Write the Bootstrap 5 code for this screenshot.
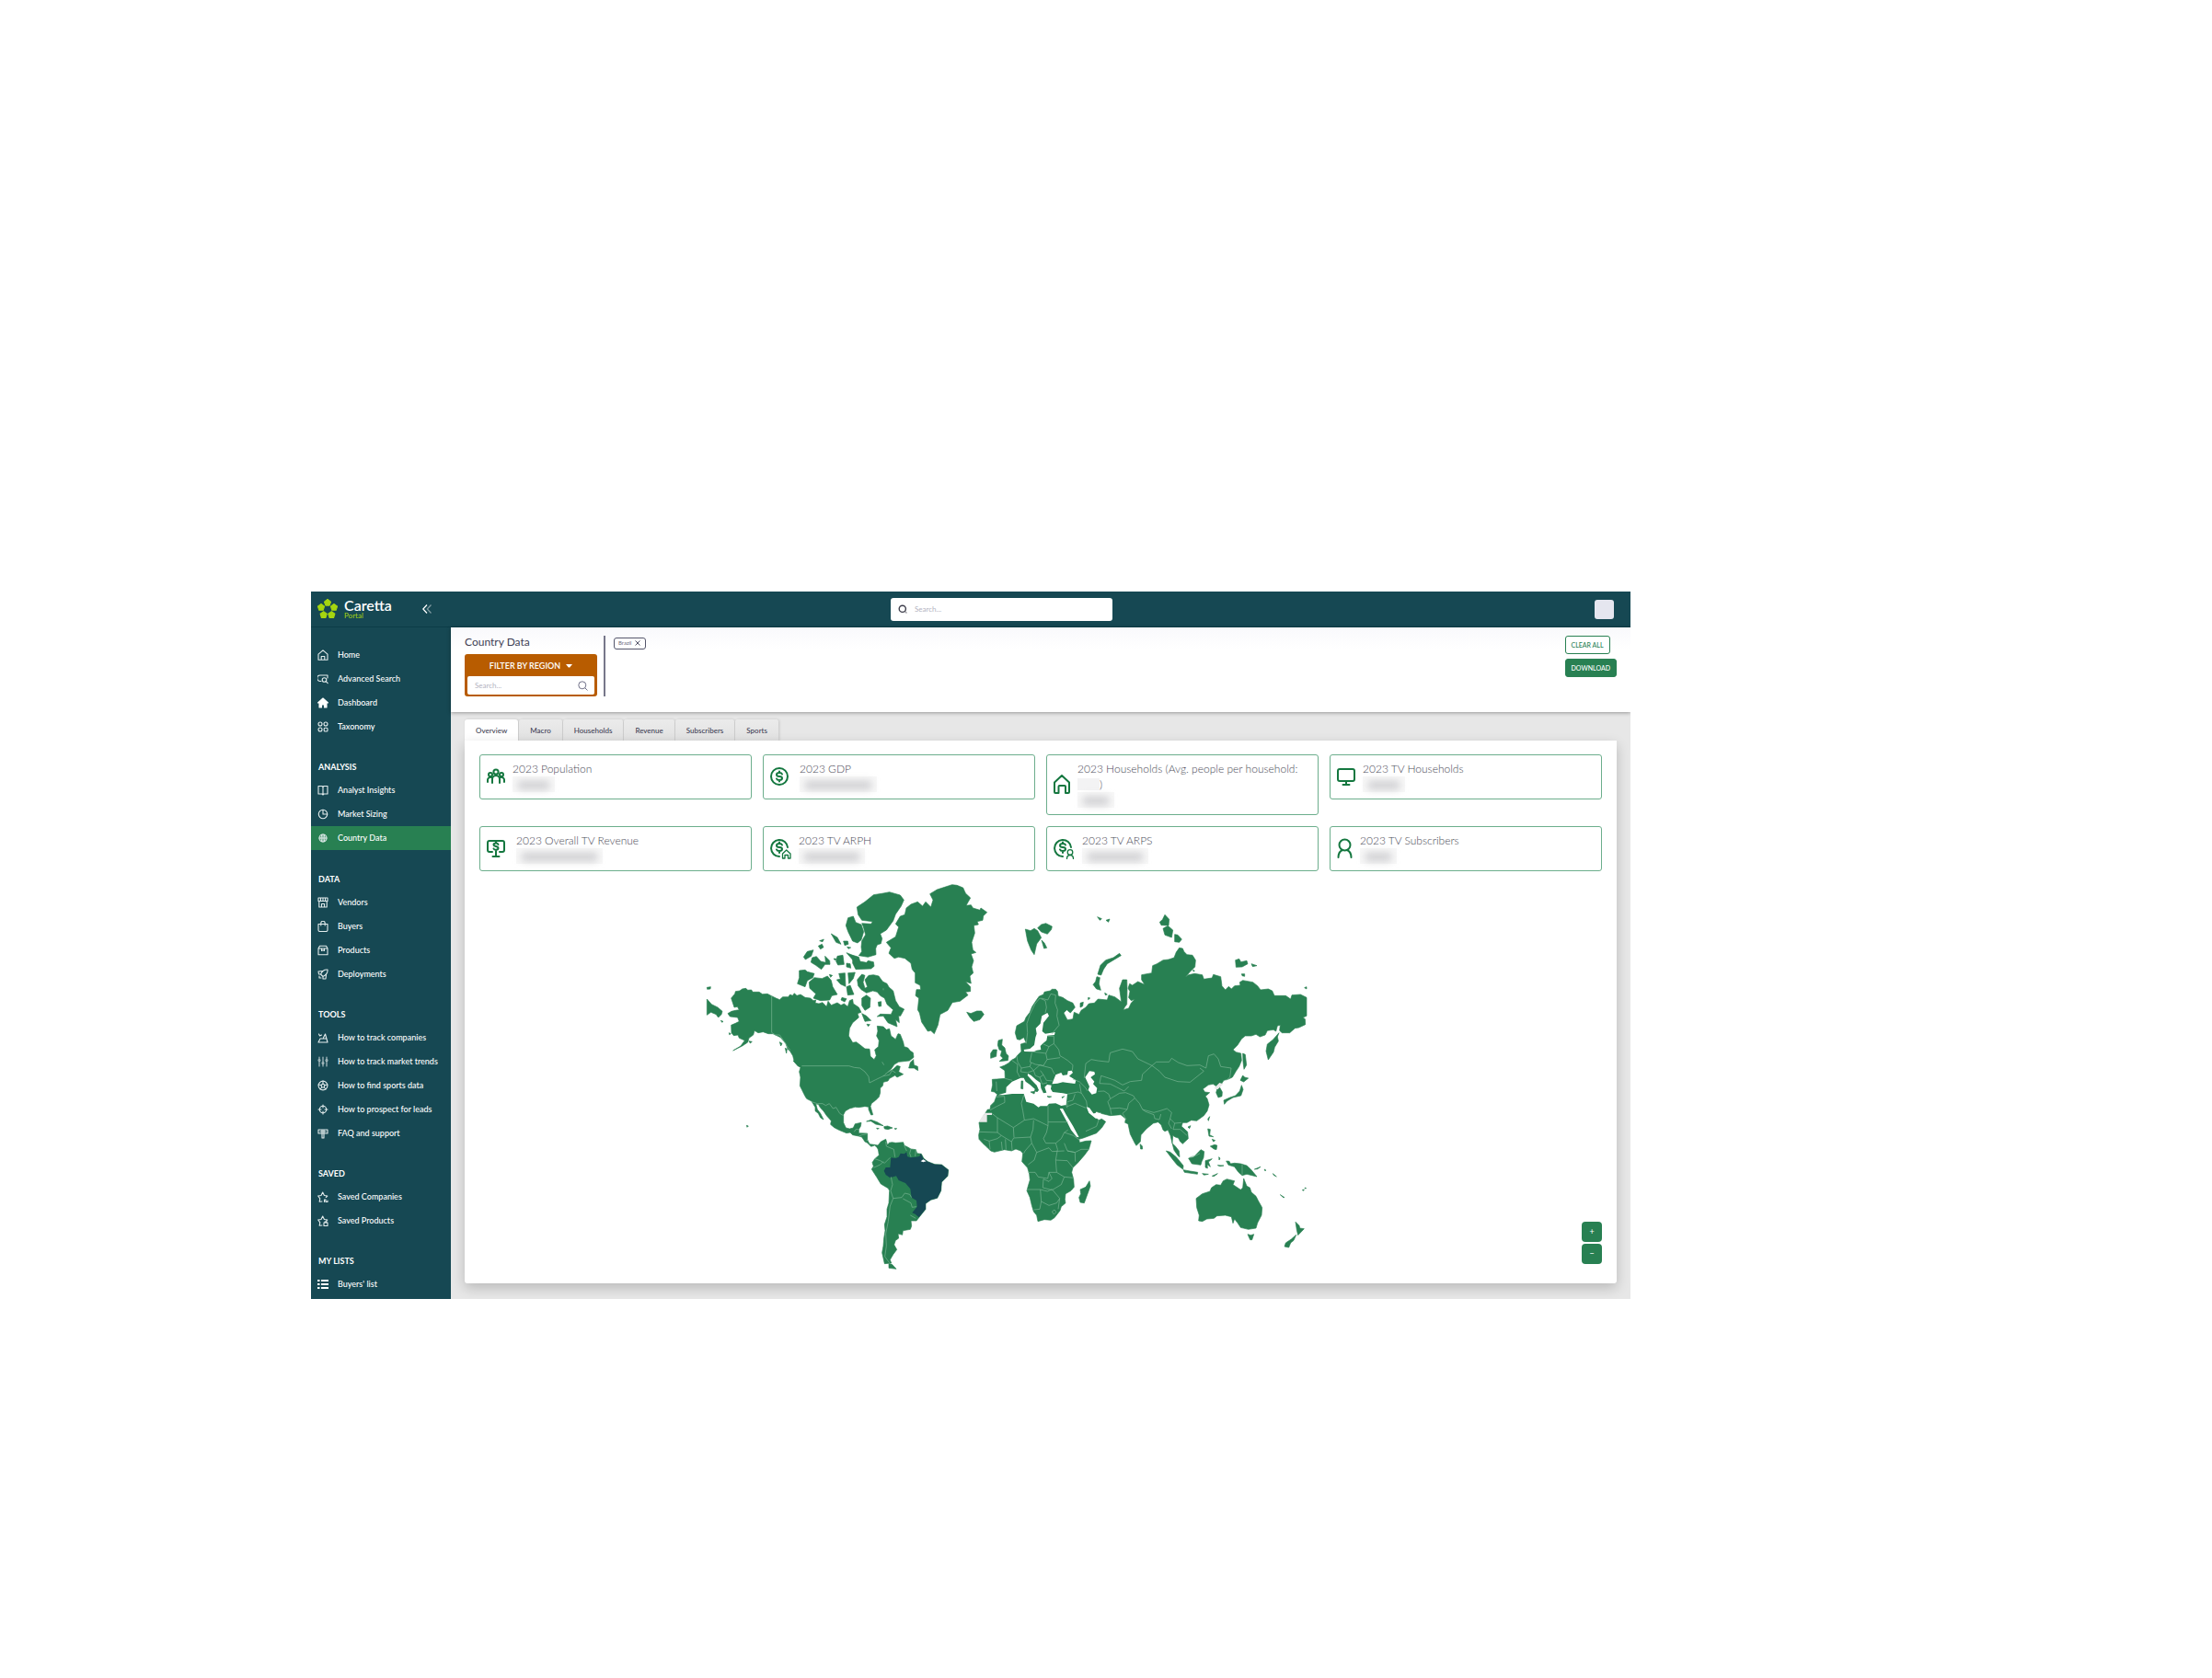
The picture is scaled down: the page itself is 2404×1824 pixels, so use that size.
<!DOCTYPE html>
<html lang="en">
<head>
<meta charset="utf-8">
<meta name="viewport" content="width=device-width, initial-scale=1">
<title>Caretta Portal – Country Data</title>
<link rel="stylesheet" href="https://cdn.jsdelivr.net/npm/bootstrap@5.3.0/dist/css/bootstrap.min.css">
<style>
:root{--teal:#164853;--teal-dark:#0b3c47;--leaf:#288052;--deep:#14773f;--lime:#a5d610;--rust:#b85c00;--ink:#3f3f55}
body{background:#fff;font-family:Lato,"Open Sans",sans-serif;font-size:9px;line-height:12px;color:var(--ink);padding:643px 632px 120px 338px}
svg{display:block;flex:none}
.portal{background:#e7e7e7;overflow:hidden}
.topbar{background:var(--teal);height:39px;border-bottom:1px solid var(--teal-dark)}
.brand{width:152px;padding:0 21px 0 7px;gap:7px}
.brand-name{font-size:16px;line-height:14px;font-weight:600;color:#fff}
.brand-sub{font-size:8px;line-height:8px;color:var(--lime)}
.find-box{width:241px;height:25px;border-radius:3px;margin-right:46px}
.plain{border:0;outline:0;background:transparent;font-size:8px;line-height:12px;padding:0;color:var(--ink);min-width:0}
.plain::placeholder{color:#b3b3bf;opacity:1}
.avatar-btn{width:21px;height:21px;border-radius:3px;background:#e5e6ef;border:0;margin-right:18px}
.sidebar{width:152px;background:var(--teal);padding:17px 0 2px}
.sidebar a{height:26px;padding:0 7px;gap:10px;color:#fff;text-decoration:none;font-weight:500;white-space:nowrap}
.sidebar a.on{background:var(--leaf);margin-bottom:1px}
.sidebar h2{font-size:9px;line-height:12px;font-weight:700;color:#fff;margin:0;padding:25px 8px 6px}
.sidebar svg{width:12px;height:12px;fill:none;stroke:#e3eced;stroke-width:1.1;stroke-linejoin:round;stroke-linecap:round}
.headband{height:92px;background:linear-gradient(#f9f9fc,#fff 24px);padding:8px 15px 0;box-shadow:0 1px 4px rgba(0,0,0,.35);position:relative}
.headband h1{font-size:12px;line-height:16px;font-weight:400;margin:0 0 5px}
.filter{width:144px;height:46px;background:var(--rust);border-radius:3px;padding:3px}
.filter-btn{border:0;background:none;color:#fff;font-size:9px;line-height:12px;font-weight:600;padding:4px 0 5px;gap:6px;width:100%}
.filter-find{background:#fff;border-radius:2px;height:20px;padding:0 7px 0 8px}
.rule{width:2px;height:66px;background:#77778a;margin:1px 9px 0 7px}
.chip{height:13px;border:1px solid #55566b;border-radius:3px;background:#fff;font-size:6px;line-height:8px;padding:0 5px 1px 4px;gap:3px;color:#6d6d80;margin-top:3px}
.acts{gap:5px;padding-top:1px}
.act{font-size:7px;line-height:10px;padding:4px 6px;border:1px solid var(--leaf);border-radius:3px;height:20px;white-space:nowrap;font-weight:500}
.act-line{background:#fff;color:var(--leaf)}
.act-fill{background:var(--leaf);color:#fff}
.content{padding:8px 15px 17px}
.tabs{border:0;gap:1px}
.tabs .nav-link{border:0;border-radius:3px 3px 0 0;font-size:8px;line-height:12px;padding:6px 12px;color:var(--ink);font-weight:500;background:linear-gradient(#ebebeb,#e1e1e1);box-shadow:1px 0 3px rgba(0,0,0,.15)}
.tabs .nav-link.active{background:#fff;color:var(--ink)}
.panel{background:#fff;border-radius:0 0 3px 3px;padding:15px 16px 8px;box-shadow:0 5px 14px rgba(0,0,0,.2);position:relative}
.stats{--bs-gutter-x:12px;--bs-gutter-y:12px}
.stat{border:1px solid #6cae8c;border-radius:3px;padding:6px 7px 7px;gap:8px}
.stat h3{font-size:12px;line-height:17px;font-weight:300;color:#4c4c58;margin:0}
.stat svg{fill:none;stroke:var(--deep);stroke-width:2;stroke-linecap:round;stroke-linejoin:round}
.veil{display:block;height:17px;background:#f8f8f8;padding:5px 6px 3px}
.veil i{display:block;height:9px;background:#cdcdd0;filter:blur(4px)}
.veil-inline{display:inline-block;width:24px;height:13px;background:#f3f3f4;vertical-align:top;margin-top:2px}
.w46{width:46px}.w84{width:84px}.w40{width:40px}.w94{width:94px}.w72{width:72px}
.map{margin-top:4px}
.map svg{width:100%;height:auto}
.land{fill:var(--leaf);stroke:var(--leaf);stroke-width:2;stroke-linejoin:round}
.sea{fill:#fff}
.edge{fill:none;stroke:#7bb795;stroke-width:2;stroke-linejoin:round}
.zoomers{position:absolute;right:16px;bottom:21px;gap:2px}
.zoomers button{width:22px;height:22px;border:0;border-radius:4px;background:var(--leaf);color:#fff;font-size:9px;line-height:12px;padding:0}
</style>
<script src="https://cdn.jsdelivr.net/npm/bootstrap@5.3.0/dist/js/bootstrap.bundle.min.js"></script>
</head>
<body>
<div class="portal">
  <header class="topbar d-flex align-items-center justify-content-between">
    <div class="brand d-flex align-items-center">
      <svg width="22" height="22" viewBox="0 0 22 22" fill="#a5d610"><defs><path id="petal" d="M11 .3 14.6 3 13.2 7.2H8.800L7.400 3Z" stroke="#a5d610" stroke-linejoin="round"/></defs><use href="#petal"/><use href="#petal" transform="rotate(72 11 11.500)"/><use href="#petal" transform="rotate(144 11 11.500)"/><use href="#petal" transform="rotate(216 11 11.500)"/><use href="#petal" transform="rotate(288 11 11.500)"/></svg>
      <div class="flex-grow-1"><div class="brand-name">Caretta</div><div class="brand-sub">Portal</div></div>
      <svg width="10" height="10" viewBox="0 0 10 10" fill="none" stroke="#fff" stroke-width="1.300"><path d="M5 .5.800 5 5 9.500"/><path d="M9.500.5 5.300 5l4.200 4.500" opacity=".45"/></svg>
    </div>
    <label class="find-box bg-white d-flex align-items-center px-2 gap-2"><svg width="10" height="10" viewBox="0 0 10 10" fill="none" stroke="#3f3f4c" stroke-width="1.400"><circle cx="4.800" cy="4.800" r="3.600"/><path d="m7.500 7.500 2 2" opacity=".5"/></svg><input class="plain flex-grow-1" type="text" placeholder="Search..." aria-label="Search the portal"></label>
    <button class="avatar-btn" type="button" aria-label="Account"></button>
  </header>
  <div class="d-flex">
    <nav class="sidebar flex-shrink-0" aria-label="Main">
      <a class="d-flex align-items-center" href="#"><svg viewBox="0 0 12 12"><path d="M1 5.200 6 .9l5 4.300v6H1ZM4.200 11V7.500h3.600V11"/></svg>Home</a>
      <a class="d-flex align-items-center" href="#"><svg viewBox="0 0 12 12"><path d="M4 8.500H3A2.500 2.500 0 0 1 3 2h8v3"/><circle cx="7.500" cy="7" r="2.300"/><path d="m9.200 8.700 2 2"/></svg>Advanced Search</a>
      <a class="d-flex align-items-center" href="#"><svg viewBox="0 0 12 12"><path fill="#fff" stroke="#fff" d="M.5 6 6 1l5.500 5H10v5H7.500V8h-3v3H2V6Z"/></svg>Dashboard</a>
      <a class="d-flex align-items-center" href="#"><svg viewBox="0 0 12 12"><circle cx="3" cy="3" r="2"/><circle cx="9" cy="3" r="2"/><circle cx="3" cy="9" r="2"/><rect x="7.200" y="7.200" width="3.800" height="3.800" rx="1"/></svg>Taxonomy</a>
      <h2>ANALYSIS</h2>
      <a class="d-flex align-items-center" href="#"><svg viewBox="0 0 12 12"><path d="M1 1.500h4l1 1 1-1h4v8.500H7l-1 1-1-1H1ZM6 2.500V11"/></svg>Analyst Insights</a>
      <a class="d-flex align-items-center" href="#"><svg viewBox="0 0 12 12"><circle cx="6" cy="6" r="4.700"/><path d="M6 1.300V6h4.700"/></svg>Market Sizing</a>
      <a class="d-flex align-items-center on" href="#" aria-current="page"><svg viewBox="0 0 12 12"><circle cx="6" cy="6" r="4"/><path d="M2 6h8M6 2v8M4.500 2.500q-1 3.500 0 7M7.500 2.500q1 3.500 0 7"/></svg>Country Data</a>
      <h2>DATA</h2>
      <a class="d-flex align-items-center" href="#"><svg viewBox="0 0 12 12"><path d="M1 1h10v3.500H1ZM1.800 4.500V11h8.400V4.500M3.500 1v3.500M6 1v3.500M8.500 1v3.500M4.500 11V7.500h3V11"/></svg>Vendors</a>
      <a class="d-flex align-items-center" href="#"><svg viewBox="0 0 12 12"><path d="M1 3.500h10V10q0 1.500-1.500 1.500h-7Q1 11.500 1 10ZM3.800 5V2.500a2.200 2.200 0 0 1 4.400 0V5"/></svg>Buyers</a>
      <a class="d-flex align-items-center" href="#"><svg viewBox="0 0 12 12"><path d="M1 4 2.500 1.300h7L11 4v6.700H1ZM1 4h10M4.500 4v2.500L6 5.800l1.500.7V4"/></svg>Products</a>
      <a class="d-flex align-items-center" href="#"><svg viewBox="0 0 12 12"><path d="M11 1Q6 .5 3.500 6L6 8.500Q11.500 6 11 1ZM5.500 2.500 1 3l.5 3h2M9.500 6.500 9 11H6V8.500M2 8v2h2"/></svg>Deployments</a>
      <h2>TOOLS</h2>
      <a class="d-flex align-items-center" href="#"><svg viewBox="0 0 12 12"><path d="M1 11h10L8.500 2 6.500 6M1 11l2-4h6M1.500 2l1 2 2-1"/></svg>How to track companies</a>
      <a class="d-flex align-items-center" href="#"><svg viewBox="0 0 12 12" opacity=".8"><path d="M2 1v2M2 6v5M6 1v5M6 9v2M10 1v2M10 6v5"/><circle cx="2" cy="4.500" r="1"/><circle cx="6" cy="7.500" r="1"/><circle cx="10" cy="4.500" r="1"/></svg>How to track market trends</a>
      <a class="d-flex align-items-center" href="#"><svg viewBox="0 0 12 12"><circle cx="6" cy="6" r="4.900"/><path d="m6 4 2 1.500L7.200 8H4.800L4 5.500ZM6 1v3M11 5 8 5.500M9 10 7.200 8M3 10l1.800-2M1 5l3 .5"/></svg>How to find sports data</a>
      <a class="d-flex align-items-center" href="#"><svg viewBox="0 0 12 12"><circle cx="6" cy="6" r="3.700"/><path d="M6 1v3M6 8v3M1 6h3M8 6h3"/></svg>How to prospect for leads</a>
      <a class="d-flex align-items-center" href="#"><svg viewBox="0 0 12 12"><path d="M1 2h10v4H1ZM5 2v9h2V2M3 4h6"/></svg>FAQ and support</a>
      <h2>SAVED</h2>
      <a class="d-flex align-items-center" href="#"><svg viewBox="0 0 12 12"><path d="M5 11 2.200 11.200 2.800 7.800.7 5l3.300-.5L5.700 1l1.700 3.500 3.400.5-1.500 1.500M7.500 11.500V9h1.500v2.500h2V10"/></svg>Saved Companies</a>
      <a class="d-flex align-items-center" href="#"><svg viewBox="0 0 12 12"><path d="M5 11 2.200 11.200 2.800 7.800.7 5l3.300-.5L5.700 1l1.700 3.500 3.400.5-1 1M7 8h4v3.500H7ZM8 8V7h2v1"/></svg>Saved Products</a>
      <h2>MY LISTS</h2>
      <a class="d-flex align-items-center" href="#"><svg viewBox="0 0 12 12"><path stroke="#fff" stroke-width="2" stroke-linecap="butt" d="M0 2h2.500M4 2h8M0 6h2.500M4 6h8M0 10h2.500M4 10h8"/></svg>Buyers' list</a>
    </nav>
    <main class="flex-grow-1">
      <section class="headband d-flex">
        <div>
          <h1>Country Data</h1>
          <div class="filter">
            <button class="filter-btn d-flex align-items-center justify-content-center" type="button">FILTER BY REGION<svg width="7" height="4" viewBox="0 0 7 4"><path fill="#fff" d="M0 0h7L4.200 3.600H2.800Z"/></svg></button>
            <label class="filter-find d-flex align-items-center"><input class="plain flex-grow-1" type="text" placeholder="Search..." aria-label="Search regions"><svg width="11" height="11" viewBox="0 0 11 11" fill="none" stroke="#6f7088"><circle cx="4.800" cy="4.800" r="4"/><path d="m7.800 7.800 2.700 2.700"/></svg></label>
          </div>
        </div>
        <div class="rule"></div>
        <div class="flex-grow-1"><button class="chip d-flex align-items-center" type="button">Brazil <svg width="6" height="6" viewBox="0 0 6 6" stroke="#55566b"><path d="m.5.5 5 5m0-5-5 5"/></svg></button></div>
        <div class="acts d-flex flex-column align-items-start">
          <button class="act act-line" type="button">CLEAR ALL</button>
          <button class="act act-fill" type="button">DOWNLOAD</button>
        </div>
      </section>
      <section class="content">
        <ul class="nav nav-tabs tabs" role="tablist">
          <li class="nav-item"><button class="nav-link active" type="button" role="tab">Overview</button></li>
          <li class="nav-item"><button class="nav-link" type="button" role="tab">Macro</button></li>
          <li class="nav-item"><button class="nav-link" type="button" role="tab">Households</button></li>
          <li class="nav-item"><button class="nav-link" type="button" role="tab">Revenue</button></li>
          <li class="nav-item"><button class="nav-link" type="button" role="tab">Subscribers</button></li>
          <li class="nav-item"><button class="nav-link" type="button" role="tab">Sports</button></li>
        </ul>
        <div class="panel">
          <div class="row row-cols-4 align-items-start stats">
            <div class="col"><div class="stat d-flex align-items-center"><svg width="20" height="18" viewBox="0 0 20 18"><circle cx="10" cy="4" r="2.600"/><circle cx="4" cy="7" r="2"/><circle cx="16" cy="7" r="2"/><path d="M6 16v-4a4 4 0 0 1 8 0v4M1 15v-2a3 3 0 0 1 4-3M19 15v-2a3 3 0 0 0-4-3"/></svg><div><h3>2023 Population</h3><span class="veil w46"><i></i></span></div></div></div>
            <div class="col"><div class="stat d-flex align-items-center"><svg class="me-1" width="20" height="20" viewBox="0 0 20 20"><circle cx="10" cy="10" r="9"/><path d="M13 7.500Q12.500 6 10 6 7 6 7 8t3 2 3 2-3 2q-2.500 0-3-1.500M10 4.500V6M10 14v1.500"/></svg><div><h3>2023 GDP</h3><span class="veil w84"><i></i></span></div></div></div>
            <div class="col"><div class="stat d-flex align-items-center"><svg width="18" height="21" viewBox="0 0 18 21"><path d="M1 8.500 9 1l8 7.500V19q0 1-1 1h-3v-7q0-1-1-1H6.500q-1 0-1 1v7H2q-1 0-1-1Z"/></svg><div><h3>2023 Households (Avg. people per household: <span class="veil-inline"></span>)</h3><span class="veil w40"><i></i></span></div></div></div>
            <div class="col"><div class="stat d-flex align-items-center"><svg width="20" height="20" viewBox="0 0 20 20"><rect x="1" y="2" width="18" height="13" rx="2"/><path d="M10 15v3.500M6.500 19h7"/></svg><div><h3>2023 TV Households</h3><span class="veil w46"><i></i></span></div></div></div>
            <div class="col"><div class="stat d-flex align-items-center"><svg class="me-1" width="20" height="20" viewBox="0 0 20 20"><path d="M6 14H3q-2 0-2-2V4q0-2 2-2h14q2 0 2 2v8q0 2-2 2h-3M10 14v4.500M6.500 19h7M12.500 6Q12 4.500 10 4.500 7.500 4.500 7.500 6T10 8t2.500 2-2.500 1.800Q8 11.800 7.500 10.500M10 3v1M10 12v2"/></svg><div><h3>2023 Overall TV Revenue</h3><span class="veil w94"><i></i></span></div></div></div>
            <div class="col"><div class="stat d-flex align-items-center"><svg width="23" height="23" viewBox="0 0 23 23"><path d="M10 20A9 9 0 1 1 19 10M13 7.500Q12.500 6 10 6 7 6 7 8t3 2 3 2-3 2q-2.500 0-3-1.500M10 4.500V6M10 14v2"/><path stroke-width="1.300" d="M13.500 17 17.700 13l4.300 4v5h-2.500v-3.500h-3.500V22h-2.500Z"/></svg><div><h3>2023 TV ARPH</h3><span class="veil w72"><i></i></span></div></div></div>
            <div class="col"><div class="stat d-flex align-items-center"><svg width="23" height="23" viewBox="0 0 23 23"><path d="M10 20A9 9 0 1 1 19 10M13 7.500Q12.500 6 10 6 7 6 7 8t3 2 3 2-3 2q-2.500 0-3-1.500M10 4.500V6M10 14v2"/><g stroke-width="1.300"><circle cx="18" cy="15.500" r="2.800"/><path d="M14.500 22.500q0-4 3.500-4t3.500 4"/></g></svg><div><h3>2023 TV ARPS</h3><span class="veil w72"><i></i></span></div></div></div>
            <div class="col"><div class="stat d-flex align-items-center"><svg width="17" height="22" viewBox="0 0 17 22"><circle cx="8.500" cy="7.500" r="6"/><path d="M1.500 21q0-6 4.500-8M15.500 21q0-6-4.500-8"/></svg><div><h3>2023 TV Subscribers</h3><span class="veil w40"><i></i></span></div></div></div>
          </div>
          <div class="map">
            <svg viewBox="-717 30 3660 1308" role="img" aria-label="World map with Brazil selected">
              <!-- the Americas and Greenland -->
              <g class="land">
                <path d="M104 432 116 418 118 410 132 408 140 402 152 400 158 406 170 405 174 412 195 412 206 419 222 418 236 425 250 432 262 437 272 428 290 428 296 420 304 424 310 416 318 424 330 420 345 430 362 432 372 440 380 438 378 448 390 450 402 446 415 460 420 442 430 455 450 447 462 455 472 450 484 460 490 440 500 436 502 450 520 462 528 478 516 482 520 495 500 512 490 530 487 555 500 577 512 575 525 585 540 597 555 598 558 622 570 632 577 620 572 600 584 590 586 570 578 555 582 540 580 523 600 525 610 535 620 532 625 555 640 566 648 548 655 550 665 575 668 590 680 594 688 604 697 610 699 625 685 636 650 640 636 648 625 664 612 676 632 664 645 652 655 655 650 672 665 680 645 690 638 684 620 694 615 702 600 706 598 718 590 725 590 740 586 754 575 765 562 775 558 785 566 812 560 813 552 795 552 787 540 785 520 788 508 787 490 792 476 800 470 812 470 838 478 855 490 858 502 855 508 842 528 838 526 850 520 860 520 872 548 873 548 895 556 908 570 910 582 912 582 922 572 912 560 916 548 904 540 900 530 885 520 882 500 878 492 870 480 872 455 862 440 854 428 844 430 832 415 815 405 800 395 790 388 778 380 777 385 795 395 808 405 828 395 822 388 808 378 800 378 788 366 768 350 760 344 750 334 730 328 718 330 690 326 672 330 658 310 640 305 620 296 605 288 598 282 580 265 560 240 548 225 548 208 542 192 545 180 538 176 552 162 562 158 576 140 588 110 603 135 588 148 570 130 562 126 552 112 554 105 545 104 520 118 514 130 508 125 495 100 492 93 482 105 475 118 472 130 470 124 460 114 462Z"/>
                <path d="M824 62 840 64 860 72 868 90 884 105 870 130 886 128 892 138 915 145 918 138 938 152 926 164 924 178 906 182 910 192 895 195 898 220 888 250 892 275 902 283 886 288 894 310 888 330 893 350 882 360 886 384 868 378 884 395 884 410 868 412 876 422 850 442 825 446 810 472 785 485 778 520 766 548 755 538 745 540 725 510 718 480 712 470 716 432 705 424 708 404 722 404 720 390 704 382 704 350 694 338 690 318 670 302 650 298 636 302 618 286 625 268 610 250 640 232 650 200 640 190 655 165 670 160 675 138 690 126 712 118 728 132 738 118 755 135 762 112 752 92 775 78 800 70Z"/>
                <path d="M514 135 540 118 568 95 600 90 620 86 655 96 667 112 658 132 640 158 632 180 610 210 590 222 596 238 592 254 580 258 575 270 576 290 550 298 520 293 530 280 528 265 530 245 542 225 535 200 530 188 560 190 565 182 530 178 518 160Z"/>
                <path d="M485 170 502 165 510 185 528 192 536 215 528 242 516 252 500 246 485 215 478 195ZM500 292 520 298 524 312 545 316 550 310 568 314 570 328 560 336 510 338 500 318ZM326 342 345 340 352 346 375 352 370 365 352 375 345 395 320 385 326 365ZM358 380 375 365 400 368 418 360 430 374 435 395 450 420 432 424 425 438 395 440 372 432 380 418 360 400ZM340 298 352 280 372 275 365 295 346 306ZM368 300 382 296 396 312 412 316 410 295 425 310 426 322 410 322 398 338 380 325 364 315ZM388 262 400 256 405 266 395 272ZM392 245 406 240 402 248ZM430 222 450 234 462 256 446 250ZM470 246 484 246 486 256 474 260ZM450 295 468 292 472 322 452 324 446 312ZM480 284 500 292 506 314 492 298ZM480 318 492 320 494 334 480 330ZM482 265 494 267 486 271ZM438 303 448 304 443 309ZM455 352 475 350 477 394 460 386 448 372 460 370ZM485 350 508 348 502 368 488 385ZM480 395 492 390 504 420 484 422ZM465 430 480 434 474 444 462 438ZM424 355 434 358 428 364Z"/>
                <path d="M515 372 530 354 540 358 534 380 540 400 548 395 540 372 552 358 568 356 585 360 598 378 612 385 618 396 632 408 640 440 652 460 668 468 656 490 650 490 652 512 640 502 645 525 615 512 600 490 580 492 590 484 625 485 632 470 612 452 604 432 590 424 580 412 566 408 545 415 528 404 518 392ZM530 432 545 422 558 432 556 462 540 472 530 456ZM530 482 545 490 560 505 540 508ZM583 445 593 443 593 458 585 459ZM546 517 556 518 551 524ZM683 660 688 642 698 632 700 650 712 655 713 668 700 660ZM25 435 40 452 60 462 75 475 72 485 62 495 55 485 38 478 25 487ZM25 397 37 395 36 402 26 403ZM872 478 885 482 905 474 920 474 928 485 915 502 895 508 882 494ZM70 505 78 508 74 511ZM97 545 103 548 98 551ZM262 575 270 580 266 588ZM280 595 286 598 284 612ZM306 636 320 642 336 658 322 654ZM162 572 172 574 166 579Z"/>
                <path d="M545 834 560 829 580 836 600 848 575 843 560 833ZM602 851 614 849 630 855 615 860 604 858ZM578 856 586 857 580 859ZM636 857 644 857 640 860ZM154 847 160 849 156 853Z"/>
                <path d="M580 915 592 900 608 892 612 905 628 902 640 904 665 902 668 912 680 918 690 924 706 926 710 938 724 940 732 955 745 965 768 974 790 975 812 992 810 1012 790 1032 788 1060 776 1084 755 1090 738 1102 738 1120 718 1145 708 1158 690 1158 692 1175 688 1186 664 1190 662 1204 648 1200 650 1215 640 1222 635 1236 644 1252 632 1268 622 1285 626 1296 604 1298 600 1280 596 1262 600 1240 602 1215 606 1190 604 1170 612 1145 612 1120 618 1100 620 1060 616 1052 592 1038 578 1015 562 990 568 980 564 968 572 956 586 944 584 930ZM618 1298 628 1300 642 1315 618 1312Z"/>
              </g>
              <path fill="#164853" d="M625 952 640 954 650 950 656 938 668 940 676 934 678 948 688 952 705 950 718 948 722 938 730 955 745 965 768 974 790 975 812 992 810 1012 790 1032 788 1060 776 1084 755 1090 738 1102 738 1120 716 1147 704 1136 694 1132 710 1112 708 1092 692 1082 688 1054 672 1035 650 1026 642 1012 622 1018 608 1008 602 995 608 984 622 984Z"/>
              <path class="sea" d="M722 964 730 958 740 964 730 967ZM612 898 618 904 614 910ZM560 300 570 300 565 303Z"/>
              <path class="edge" d="M236 425V544L248 552 262 552 278 575 290 595 298 602M334 653H488L505 658 524 660 540 672 552 688 555 708 575 698 600 686 620 682 628 668 640 675M600 686 606 680 622 668M366 770 385 776H402L412 782 424 776 436 792 446 788 458 808 470 815M505 868 510 860 520 860M520 882 530 878 548 875M545 895 552 896M608 900 610 915 634 925 638 950M572 956 590 962 604 970 622 952M568 985 590 975 600 965M625 1015 630 1040 624 1060 632 1085 622 1110 616 1160 608 1200 610 1240 605 1275 620 1295M632 1085 660 1082 670 1068 686 1072 692 1082M664 1086 690 1100 694 1114 708 1112M688 1140 706 1150M668 912 676 930M690 924 686 938 690 950M706 926 704 948M596 640 602 650M600 400 600 406"/>
              <!-- Europe, Asia and Africa -->
              <g transform="translate(900 0)">
                <g class="land">
                  <path d="M268 410 262 403 250 403 244 408 225 412 222 420 208 426 198 440 185 460 178 478 165 495 160 508 135 522 130 545 136 566 145 568 158 560 166 578 160 578 148 582 150 606 138 618 130 628 118 634 108 644 94 652 80 657 96 668 97 694 70 696 55 697 56 715 52 736 62 738 72 746 68 754 62 770 50 782 48 795 40 795 32 808 18 830 12 838 15 860 11 878 12 892 24 905 38 918 50 930 62 934 95 926 118 930 132 924 148 930 155 938 152 965 170 985 176 1005 178 1025 172 1045 168 1060 178 1082 184 1108 190 1128 200 1140 204 1160 225 1154 246 1156 258 1148 276 1125 280 1112 294 1100 292 1088 294 1070 312 1060 322 1048 320 1022 314 1000 318 985 335 968 355 945 370 925 378 897 360 898 340 903 338 892 352 888 395 872 412 855 425 835 412 826 402 830 385 812 395 802 410 808 440 815 474 812 490 825 488 838 498 842 505 875 520 905 525 913 538 900 540 878 558 858 580 840 596 836 606 845 612 862 618 866 628 862 636 880 642 905 648 928 660 945 666 950 664 930 652 915 642 905 644 880 652 885 662 888 668 900 676 907 694 890 692 868 672 850 676 838 690 838 704 830 722 832 745 815 756 800 762 780 756 760 750 752 764 740 748 738 742 728 760 715 775 712 790 722 785 740 792 756 804 752 805 738 796 722 810 700 825 696 838 690 850 670 860 655 868 635 866 612 850 608 840 600 855 585 868 565 880 555 900 555 915 550 928 558 945 552 952 538 972 535 980 540 985 522 994 520 992 538 1000 545 1025 545 1042 530 1055 528 1076 518 1075 500 1068 495 1080 490 1080 430 1060 420 1032 422 1028 435 1012 424 975 424 968 408 955 402 930 405 920 392 905 380 872 374 862 380 864 390 845 392 835 402 826 394 815 405 804 392 800 362 776 355 772 366 745 370 740 356 715 352 695 356 685 363 700 346 716 330 718 308 708 292 690 290 680 280 676 270 665 268 655 282 648 300 630 306 612 308 592 320 578 326 575 350 542 356 542 372 552 388 530 378 512 390 503 385 498 400 504 410 500 430 508 440 520 435 508 448 500 465 482 470 488 460 494 452 495 400 494 372 480 372 470 400 476 444 455 428 435 422 430 438 400 435 388 448 370 450 360 462 345 472 338 485 322 478 318 500 300 503 288 480 298 470 310 480 325 462 318 448 300 440 285 430 270 425Z"/>
                  <path d="M75 570 88 566 86 585 96 594 100 612 108 620 106 635 78 638 90 628 82 620 86 604 78 600 73 585ZM50 612 58 600 70 600 68 622 50 628ZM163 207 180 212 192 205 203 212 215 235 200 255 192 290 182 275 170 245ZM203 203 215 192 230 188 250 198 248 208 235 223 215 216ZM216 243 225 252 233 268 224 270ZM470 286 475 293 455 305 430 320 418 338 410 357 399 354 408 325 425 308 450 300ZM396 362 406 365 403 385 409 406 395 402 384 388 392 378ZM618 160 632 175 630 195 606 194 601 184 610 176ZM612 205 628 196 644 210 640 234 618 226ZM650 224 660 226 673 240 665 250 650 248ZM398 167 412 173 406 178ZM426 178 438 174 434 184ZM848 308 860 304 866 314 885 310 888 320 870 330 850 331ZM900 320 918 326 904 329ZM868 353 878 353 878 361 870 359ZM1073 398 1080 395 1080 402ZM955 633 948 605 952 582 970 568 990 545 985 558 988 572 976 592 972 608ZM872 612 880 616 884 650 876 664 873 640ZM872 684 878 690 890 693 875 705 864 700ZM868 716 873 730 866 750 840 756 820 768 812 778 810 765 830 756 848 750 862 735ZM342 448 352 445 350 458 342 462ZM368 430 374 432 368 437ZM422 415 430 420 424 422ZM537 908 544 914 545 924 539 924ZM710 340 715 343 711 345ZM216 570 222 568 220 578ZM203 572 207 578 203 580Z"/>
                </g>
                <g class="sea">
                  <path d="M74 748 100 740 101 722 112 712 120 704 148 692 158 692 164 704 178 714 194 728 192 736 202 738 207 732 200 716 184 700 170 684 172 678 182 684 198 698 212 708 214 725 222 742 232 740 226 722 234 714 248 716 246 728 252 738 285 742 300 745 296 780 280 783 262 775 240 776 234 784 212 784 206 788 190 776 166 770 158 744 120 744 90 748Z"/>
                  <path d="M250 712 262 682 280 675 285 684 300 682 302 670 314 668 318 675 306 686 328 700 325 711 300 708 285 706 268 710ZM358 690 372 670 388 672 390 680 376 690 388 704 384 712 397 725 394 742 380 746 368 732 372 720ZM235 480 240 490 222 512 218 540 228 548 260 543 258 552 235 554 232 570 222 578 212 588 214 600 200 602 190 607 160 606 158 600 178 597 192 585 196 560 200 548 197 530 212 515 217 490ZM275 792 285 792 296 812 318 848 338 886 330 884 312 862 300 838ZM362 786 372 790 385 808 410 806 402 824 392 824 370 806Z"/>
                </g>
                <g class="land"><path d="M150 702 155 702 155 728 149 727ZM180 738 194 736 192 744ZM234 752 248 753 240 756ZM282 755 290 752 284 758Z"/></g>
                <path fill="#e9e9e9" d="M32 806H54V813H38V836H12L22 818ZM778 726 796 708 808 712 790 730Z"/>
                <path class="edge" d="M166 580 170 545 168 515 178 485 195 450 210 432 228 440 232 462 228 480M215 432 236 438 246 418 262 422M262 422 260 448 268 470 266 490 273 520 250 548M236 556 256 556 256 580 272 600 276 620 290 628 302 636 318 650 316 668M256 580 240 590 222 582M240 590 230 612 234 632 276 626M230 612 190 607M178 640 196 648 222 652 234 632M135 620 138 640 150 660 178 655 182 642M178 640 184 610M118 634 138 648 136 672 145 690M150 660 148 672 170 675 190 668 178 655M190 668 210 650 228 655 248 660 258 680M190 668 196 685 210 690 222 682 212 668M222 682 232 700 252 702M210 690 218 712 234 708M97 694 120 700M68 704 70 735M355 692 360 645 378 632 400 636 435 640 438 618 440 610 480 598 512 606 530 630 576 652 590 640 632 640 640 628 662 642 690 652 732 650 752 660 760 620 778 614 792 630 800 655 834 660 830 690 818 700M576 652 600 670 618 690 660 704 700 706 720 690 745 670 732 660M576 652 545 680 542 700 505 704 480 715 455 700 432 692 410 685 405 710 440 712 460 722 485 735 500 720M400 736 420 735 435 745 440 760 470 742 490 740 515 750 520 758 500 775 495 795 470 790 440 792 432 770 440 760M440 792 444 812M520 758 535 775 545 795 582 805 600 800 625 792 640 805 635 825 650 840 672 838M495 795 480 808 492 828M545 795 555 802 582 812 585 825 600 828 605 810M635 825 630 840 640 858M650 840 645 860 668 860 690 880M318 696 340 705 360 725 366 735M340 712 345 740 362 768 365 788M300 745 335 738 345 742M325 745 318 765 300 770 300 785 325 775 360 790M295 780 300 790M360 866 395 850 402 830"/>
                <path class="edge" d="M68 754 95 752 96 772 70 785 48 797M54 808 72 822 72 870 12 868M72 822 124 854 160 830 155 800 150 775 158 748M160 830 190 825 237 848 237 782M237 836H302M237 848 232 870 222 890 230 905M190 830 188 860 180 885 125 888 118 900 85 880 72 870M124 854 126 886M85 880 72 890 45 898 28 892M118 900 120 928M98 892 100 926M85 900 88 928M45 898 48 925M180 885 184 905 162 930 158 938M184 905 200 935 240 920 250 932 290 930M230 905 262 905 280 890 290 870 302 862M290 870 320 880 340 895M290 905 300 930 325 935 345 925 370 925M300 930 325 935 326 965M262 905 268 925 262 960 265 1000 240 1000 236 1020 205 1015 195 1000 172 1000M200 935 192 960 172 975M262 960 300 962 318 985M265 1000 290 1015 320 1018M240 1000 250 1020 240 1030 222 1022 220 1050 250 1058 280 1040 290 1015M168 1056H212L235 1062 250 1055 275 1085 265 1100 240 1108 215 1095 210 1120 190 1122M212 1056 215 1095M275 1085 270 1120M250 1128 258 1122 264 1130 256 1137Z"/>
              </g>
              <!-- southern islands, South-East Asia and Oceania -->
              <g class="land" transform="translate(840 570)">
                <path d="M432 458 435 475 426 500 415 530 402 528 398 512 404 500 402 486 420 478ZM682 360 695 364 715 380 728 396 738 408 737 420 718 406 705 390ZM738 422 760 426 785 430 784 436 742 430ZM755 384 772 380 795 356 806 362 804 382 798 395 795 406 766 402ZM810 392 832 386 820 396 826 412 816 404 817 417 810 414ZM878 393 888 394 892 402 905 400 925 402 945 408 958 420 978 444 945 436 930 440 918 430 905 412 885 406ZM818 288 826 290 824 308 836 314 822 312ZM826 345 840 340 848 342 846 356 838 354ZM818 256 824 248 820 262ZM753 282 762 278 758 287ZM800 434 820 436 806 439ZM832 442 850 434 838 443ZM970 420 990 412 980 419ZM1003 420 1008 424 1003 424ZM1030 434 1042 444 1034 440ZM1054 503 1068 512 1064 512ZM1126 488 1132 486 1130 490ZM1134 480 1139 482 1135 483ZM854 380 858 384 855 390ZM850 407 870 408 858 410ZM832 322 842 326 836 330Z"/>
                <path d="M780 515 800 500 825 492 830 480 845 470 860 472 868 458 880 452 905 458 900 470 925 487 932 480 935 450 945 475 955 480 960 495 975 508 982 522 995 545 993 570 980 595 975 612 950 616 925 610 915 595 905 582 900 596 895 575 875 570 848 572 838 580 815 582 800 590 788 588 790 570 782 545ZM948 632 958 635 968 632 962 650 956 650ZM1104 592 1116 604 1118 612 1132 614 1112 635 1108 618ZM1106 634 1098 652 1088 660 1082 675 1068 672 1072 660 1090 648Z"/>
              </g>
              <path class="edge" d="M1770 975V1008M1600 950 1620 945 1632 938"/>
            </svg>
          </div>
          <div class="zoomers d-flex flex-column"><button type="button" aria-label="Zoom in">+</button><button type="button" aria-label="Zoom out">−</button></div>
        </div>
      </section>
    </main>
  </div>
</div>
</body>
</html>
